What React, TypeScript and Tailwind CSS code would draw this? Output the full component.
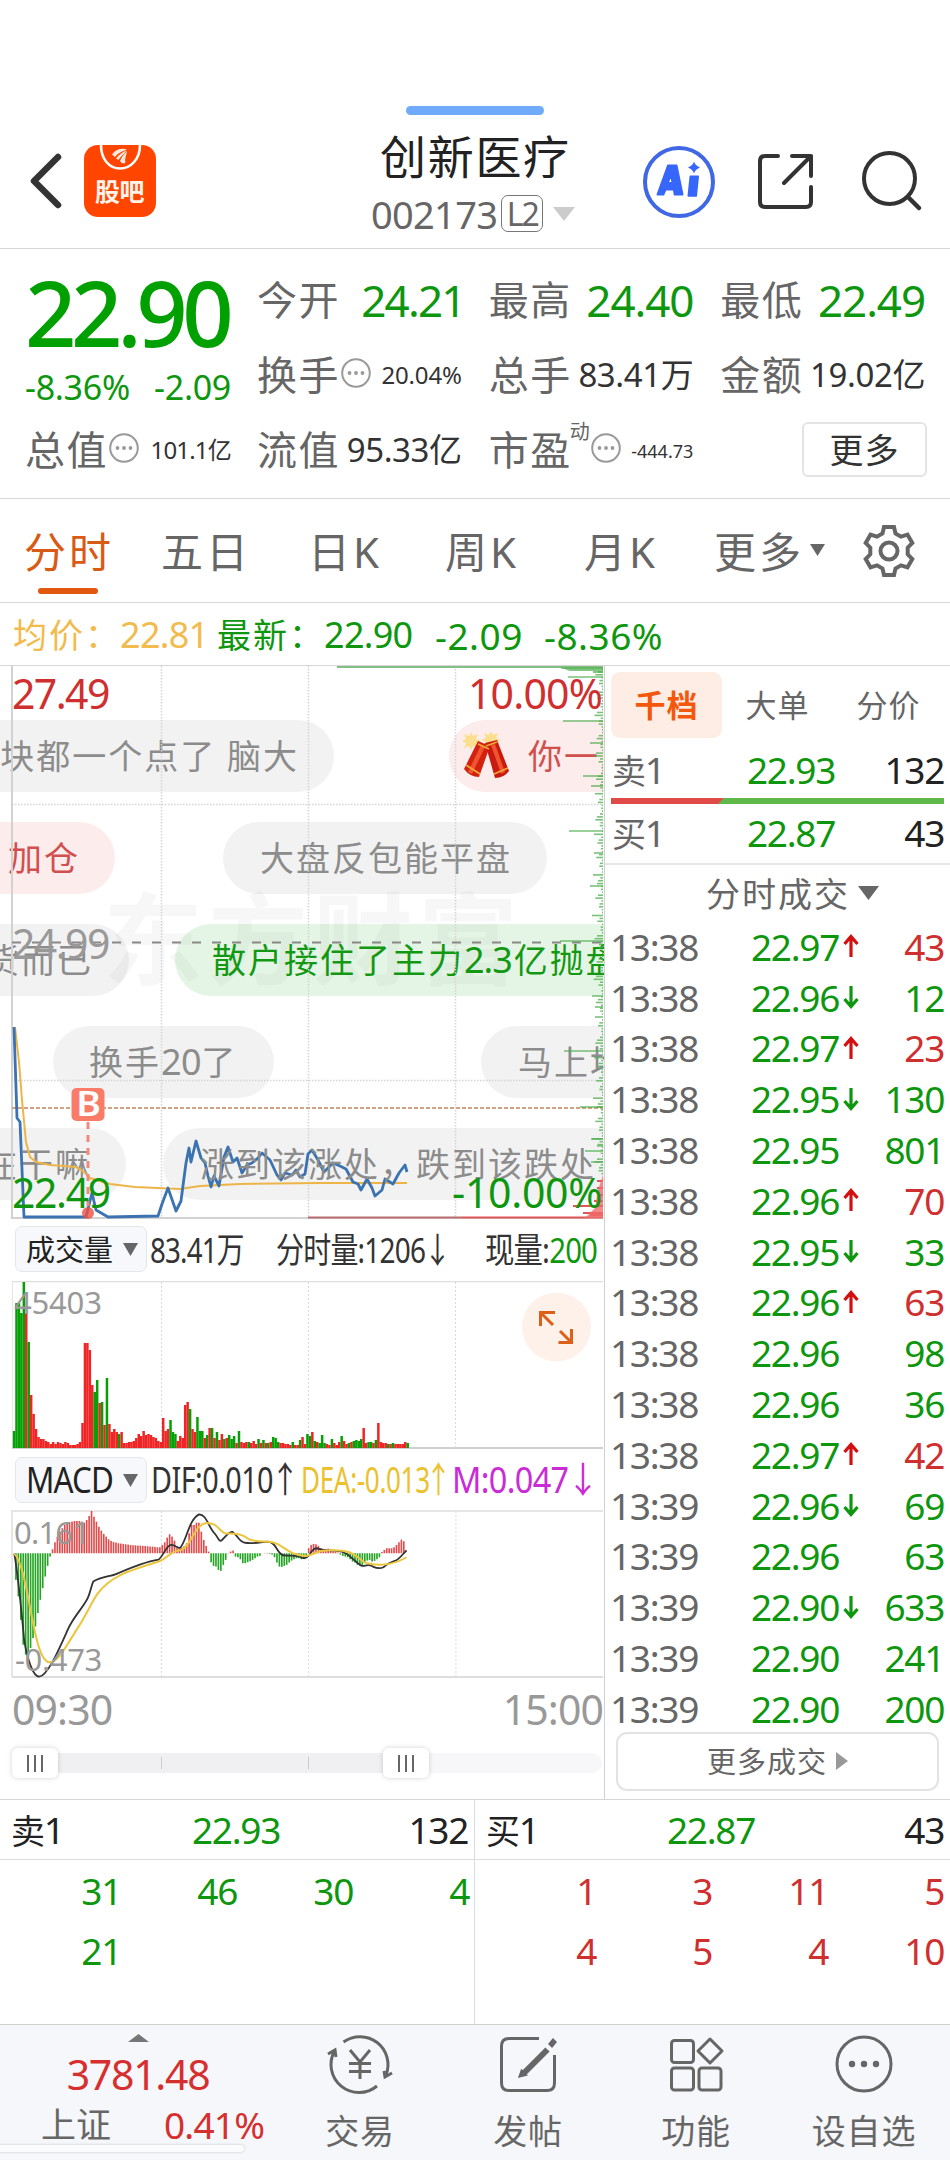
import React from 'react';

type Side = 'up' | 'down' | '';

type Tick = { time: string; price: string; dir: Side; qty: number; buy?: boolean };

const GREEN = '#0e970e';

const TICKS: Tick[] = [
  { time: '13:38', price: '22.97', dir: 'up', qty: 43, buy: true },
  { time: '13:38', price: '22.96', dir: 'down', qty: 12 },
  { time: '13:38', price: '22.97', dir: 'up', qty: 23, buy: true },
  { time: '13:38', price: '22.95', dir: 'down', qty: 130 },
  { time: '13:38', price: '22.95', dir: '', qty: 801 },
  { time: '13:38', price: '22.96', dir: 'up', qty: 70, buy: true },
  { time: '13:38', price: '22.95', dir: 'down', qty: 33 },
  { time: '13:38', price: '22.96', dir: 'up', qty: 63, buy: true },
  { time: '13:38', price: '22.96', dir: '', qty: 98 },
  { time: '13:38', price: '22.96', dir: '', qty: 36 },
  { time: '13:38', price: '22.97', dir: 'up', qty: 42, buy: true },
  { time: '13:39', price: '22.96', dir: 'down', qty: 69 },
  { time: '13:39', price: '22.96', dir: '', qty: 63 },
  { time: '13:39', price: '22.90', dir: 'down', qty: 633 },
  { time: '13:39', price: '22.90', dir: '', qty: 241 },
  { time: '13:39', price: '22.90', dir: '', qty: 200 },
];

// negative = down bar (green)
const VOLUME = [
  -17, -145, -145, -135, -166, 135, -106, 53, 34, 19, 11, 9, 9, 7, 6, 4, 6, 4, 6, 5, 4, 6, 5, 3, 3, 3, 4, 6,
  25, 105, 105, 98, 63, -56, -68, 45, -46, 23, -70, 24, 16, 19, 16, -14, 16, 5, 5, 6, 6, 7, 10, 14, 12, 17, 13, 14,
  13, 11, 10, 7, 6, 30, 17, 19, -28, -16, -14, 7, 12, 10, 43, 46, -39, 19, 16, -31, -17, -17, 10, -13, 20, -20, 10,
  -16, 8, 14, -9, 10, -13, -9, -12, 5, -17, 6, 5, 6, -6, 5, 7, 4, -9, 5, -8, 5, -5, 6, -11, -10, -6, 5, 5, 4, 4, 3,
  -6, 3, 3, -8, 11, 4, -14, -12, 16, -7, 6, -5, -13, -5, 4, 3, -9, 5, 3, 6, -12, 7, 4, -5, 6, -7, -8, -7, -9, 20,
  5, -6, -6, 5, -8, 25, 6, 5, 5, -4, 4, -5, 4, 4, 4, 4, 6, -5,
];

const MACD = [
  -80, -130, -200, -275, -305, -300, -285, -255, -220, -180, -140, -105, -70, -38, -10,
  12, 33, 50, 65, 75, 85, 90, 93, 95, 97, 97, 97, 95, 92, 100, 112, 127, 110, 95, 80, 68, 58, 50, 42, 37, 34, 32,
  30, 29, 28, 27, 26, 25, 24, 24, 23, 23, 22, 22, 21, 20, 20, 19, 18, 18, 25, 33, 47, 57, 50, 38, 15, 15, 17, 22, 30,
  60, 85, 85, 92, 92, 65, 40, 22, 5, -27, -38, -40, -50, -53, -35, -20, 1, 5, 8, -10, -12, -18, -30, -30, -27, -24,
  -20, -15, -10, -8, 0, 1, 1, -2, -4, -12, -28, -40, -41, -38, -35, -28, -22, -18, -15, -15, -18, -17, -8, 15,
  25, 28, 27, 22, 15, 8, 12, 14, 8, 5, 4, 2, -4, -8, -10, -12, -18, -25, -28, -35, -38, -35, -30, -22, -20, -25, -23,
  -18, -12, 4, 10, 15, 15, 15, 18, 25, 33, 41, 36,
];

const PRICE_LINE =
  '14,1027 17,1118 20,1122 24,1217 86,1217 92,1193 96,1210 108,1217 158,1216 162,1204 168,1188 176,1211 181,1201 184,1178 186,1163 189,1148 191,1162 196,1141 201,1158 205,1163 208,1176 211,1187 214,1176 219,1186 224,1157 228,1147 233,1162 237,1158 242,1173 247,1165 252,1163 258,1158 262,1153 270,1160 277,1175 281,1180 285,1173 292,1175 296,1170 300,1177 305,1174 308,1154 312,1150 318,1160 324,1172 333,1163 340,1166 346,1169 353,1182 358,1184 361,1190 367,1179 372,1188 375,1196 382,1190 385,1179 393,1184 399,1173 405,1165 407,1172';

const AVG_LINE =
  '15,1027 19,1062 22,1100 26,1142 30,1157 36,1162 50,1165 76,1167 84,1172 90,1178 110,1184 135,1187 180,1189 200,1186 240,1184 320,1183 407,1183';

// [y, start x] of the longer rungs in the price distribution at the right edge
const RUNGS = [
  [668, 561], [677, 568], [721, 563], [743, 590], [776, 583], [786, 591], [831, 569], [853, 594], [886, 590],
  [941, 560], [996, 592], [1007, 595], [1051, 564], [1107, 580], [1139, 591], [1146, 597], [1151, 585], [1162, 591],
];

const MINI_RUNGS = Array.from({ length: 175 }, (_, i) => {
  const w = ((i * 37) % 11) * ((i * 13) % 7);
  return { y: 669 + i * 2.9, w: 1 + w / 6 };
});

const Down: React.FC<{ w: number; h: number; className: string }> = ({ w, h, className }) => (
  <svg width={w} height={h} viewBox="0 0 20 14" preserveAspectRatio="none" className={`shrink-0 ${className}`}>
    <path d="M0 0h20L10 14z" fill="currentColor" />
  </svg>
);

const Dots: React.FC = () => (
  <svg width="30" height="30" viewBox="0 0 30 30" className="mb-[4px] ml-px shrink-0 text-[#999]">
    <circle cx="15" cy="15" r="13.8" fill="none" stroke="currentColor" strokeWidth="2" />
    <circle cx="8.5" cy="15" r="1.9" fill="currentColor" />
    <circle cx="15" cy="15" r="1.9" fill="currentColor" />
    <circle cx="21.5" cy="15" r="1.9" fill="currentColor" />
  </svg>
);

const Header: React.FC = () => (
  <header className="h-[249px] border-b border-[#d6d6d6] pt-[106px]">
    <div className="mx-auto h-[9px] w-[138px] rounded-full bg-[#70abfb]" />
    <div className="flex h-[133px]">
      <svg width="34" height="60" viewBox="0 0 34 60" className="ml-[29px] mt-[36px] shrink-0">
        <path d="M29 6 5 30l24 24" fill="none" stroke="#333" strokeWidth="6.5" strokeLinecap="round" strokeLinejoin="round" />
      </svg>
      <div className="relative ml-[21px] mt-[30px] h-[72px] w-[72px] shrink-0 overflow-hidden rounded-[14px] bg-[#ff4500]">
        <svg width="72" height="72" viewBox="0 0 72 72" className="absolute inset-0">
          <path d="M17 0c0 14 8 23.5 19 23.5S56 14 56 0" fill="none" stroke="#fff" strokeWidth="2.6" />
          <path d="M28 9.500C32 4 38 3 43 4.500 38 6 33 9 31 12zM32 13.500C35 9.500 39 6.500 43 5.500 40 9 36 12 34.500 15zM36 16C38 12 40 8.500 43 6.500 42 11 40.500 14 41.500 17.500 39.500 19 37.500 18.500 36 16z" fill="#ffe9de" />
        </svg>
        <span className="absolute left-[11px] top-[33px] text-[25px] font-bold leading-[27px] tracking-[-0.5px] text-[#fff3ea]">股吧</span>
      </div>
      <div className="ml-[215px] flex w-[205px] shrink-0 flex-col">
        <span className="mt-[13px] h-[57px] pl-[9px] text-[46px] leading-[57px] tracking-[1.7px] text-[#222]">创新医疗</span>
        <div className="flex h-[57px] items-center whitespace-nowrap text-[#666]">
          <span className="text-[38px] leading-[50px] tracking-[-0.7px]">002173</span>
          <span className="ml-[4px] flex h-[37px] w-[42px] items-center justify-center rounded-[7px] border border-[#777] text-[32px] leading-none tracking-[-2px]">L2</span>
          <Down w={22} h={14} className="ml-[10px] text-[#ccc]" />
        </div>
      </div>
      <svg width="74" height="74" viewBox="0 0 74 74" className="ml-[66px] mt-[30px] shrink-0">
        <circle cx="37" cy="37" r="34" fill="none" stroke="#4067e4" strokeWidth="4" />
        <path d="M15.5 49.5 26 20.5h8.500L40.5 49.5h-7.800l-.8-5H23.5l-2.200 5zM25.5 38h5l-1.200-8.500z" fill="#3766fb" stroke="#3766fb" strokeWidth="2" fillRule="evenodd" strokeLinejoin="round" />
        <path d="M48.5 31.5h7.500l-2 19.300h-7.500z" fill="#3766fb" stroke="#3766fb" strokeWidth="2" strokeLinejoin="round" />
        <path d="M52 16.500c1 3 2.500 4.500 6 6-3.500 1.500-5 3-6 6-1-3-2.500-4.500-6-6 3.500-1.500 5-3 6-6z" fill="#3766fb" />
      </svg>
      <svg width="62" height="62" viewBox="0 0 62 62" className="ml-[39px] mt-[36px] shrink-0">
        <path d="M23 5H10q-5 0-5 5v41q0 5 5 5h41q5 0 5-5V36M37 5h19v20M56 5 29 32" fill="none" stroke="#333" strokeWidth="4" strokeLinecap="round" strokeLinejoin="round" />
      </svg>
      <svg width="64" height="64" viewBox="0 0 64 64" className="ml-[42px] mt-[34px] shrink-0">
        <circle cx="30.5" cy="29.5" r="25.5" fill="none" stroke="#333" strokeWidth="4" />
        <path d="M49 48 60 59" stroke="#333" strokeWidth="4.500" strokeLinecap="round" />
      </svg>
    </div>
  </header>
);

const Label: React.FC<{ children: React.ReactNode }> = ({ children }) => (
  <span className="text-[40px] tracking-[1.5px] text-[#666]">{children}</span>
);

const Quote: React.FC = () => (
  <section className="flex h-[250px] border-b border-[#d6d6d6] pl-[25px] pt-[13px] leading-none">
    <div className="w-[206px] shrink-0">
      <div className="flex h-[100px] items-center whitespace-nowrap text-[90px] font-medium tracking-[-5.4px] text-[#00a000]">22.90</div>
      <div className="flex h-[50px] items-center justify-between whitespace-nowrap pb-px text-[34px] tracking-[-0.3px]" style={{ color: GREEN }}>
        <span>-8.36%</span>
        <span>-2.09</span>
      </div>
      <div className="flex h-[75px] items-center whitespace-nowrap">
        <Label>总值</Label>
        <Dots />
        <span className="ml-auto text-[24px] tracking-[-0.8px] text-[#333]">101.1亿</span>
      </div>
    </div>
    <div className="ml-[26px] grid w-[668px] shrink-0 grid-cols-3 grid-rows-[75px_75px_75px] gap-x-[27px] whitespace-nowrap text-[#333]">
      {[['今开', '24.21'], ['最高', '24.40'], ['最低', '22.49']].map(([k, v]) => (
        <div key={k} className="flex items-center justify-between">
          <Label>{k}</Label>
          <span className={`text-[44px] ${v.endsWith('1') ? 'mr-[-3px] tracking-[-1.8px]' : 'tracking-[-1.1px]'}`} style={{ color: GREEN }}>{v}</span>
        </div>
      ))}
      <div className="flex items-center">
        <Label>换手</Label>
        <Dots />
        <span className="ml-auto text-[24px] tracking-[-0.2px]">20.04%</span>
      </div>
      {[['总手', '83.41万'], ['金额', '19.02亿'], ['流值', '95.33亿']].map(([k, v]) => (
        <div key={k} className="flex items-center justify-between">
          <Label>{k}</Label>
          <span className="text-[33px] tracking-[-0.4px]">{v}</span>
        </div>
      ))}
      <div className="flex items-center">
        <Label>市盈</Label>
        <span className="mb-[36px] ml-[-2px] text-[20px] text-[#666]">动</span>
        <Dots />
        <span className="ml-auto pt-[3px] text-[18px]">-444.73</span>
      </div>
      <div className="flex items-center justify-end">
        <button className="mr-[-2px] flex h-[55px] w-[125px] items-center justify-center rounded-[6px] border-2 border-[#e4e4e4] text-[34px] tracking-[1px]">更多</button>
      </div>
    </div>
  </section>
);

const Tabs: React.FC = () => (
  <nav className="flex h-[104px] whitespace-nowrap border-b border-[#d6d6d6] text-[42px] leading-[106px] tracking-[3px] text-[#666]">
    <div className="relative ml-[24px] w-[137px] text-[#d85a14]">
      分时
      <span className="absolute left-[14px] top-[89px] h-[6px] w-[60px] rounded-full bg-[#e2580f]" />
    </div>
    <span className="w-[147px]">五日</span>
    <span className="w-[137px]">日K</span>
    <span className="w-[139px]">周K</span>
    <span className="w-[130px]">月K</span>
    <span>更多</span>
    <Down w={15} h={12} className="ml-[6px] mt-[45px]" />
    <svg width="54" height="54" viewBox="0 0 54 54" className="ml-[37px] mt-[25px] shrink-0">
      <path d="M22 3h10l1.500 6.500 5.500 3.200 6.500-2 4.800 8.200-4.600 4.800v6.600l4.600 4.800-4.800 8.200-6.500-2-5.500 3.200L32 51H22l-1.500-6.500-5.500-3.200-6.500 2-4.800-8.200 4.600-4.800v-6.600l-4.600-4.800 4.800-8.200 6.500 2 5.500-3.200z" fill="none" stroke="#666" strokeWidth="4" />
      <circle cx="27" cy="27" r="8.5" fill="none" stroke="#666" strokeWidth="4" />
    </svg>
  </nav>
);

const Summary: React.FC = () => (
  <div className="flex h-[63px] items-center whitespace-nowrap border-b border-[#d6d6d6] pl-[13px] pt-[2px] text-[36px] leading-none tracking-[-0.7px]" style={{ color: GREEN }}>
    <span className="w-[107px] text-[34px] tracking-[2px] text-[#f1bb4e]">均价：</span>
    <span className="w-[97px] text-[#f1bb4e]">22.81</span>
    <span className="w-[107px] text-[34px] tracking-[2px]">最新：</span>
    <span className="w-[111px]">22.90</span>
    <span className="w-[109px] text-[37px] tracking-[0.5px]">-2.09</span>
    <span className="text-[37px] tracking-[0.5px]">-8.36%</span>
  </div>
);

const Bubble: React.FC<{ className: string; children: React.ReactNode }> = ({ className, children }) => (
  <div className={`absolute flex h-[72px] items-center whitespace-nowrap text-[34px] leading-none tracking-[2px] ${className}`}>{children}</div>
);

const GREY = 'bg-black/5 text-[#8c8c8c]';

const Firecracker: React.FC = () => (
  <svg width="50" height="50" viewBox="0 0 50 50" className="shrink-0">
    <g fill="#fbdf8e">
      <path d="m10 1 2 4 5-2-2 5 5 2-5 2 2 5-5-2-2 4-2-4-5 2 2-5-4-2 4-2-2-5 5 2z" />
      <path d="m30 0 2 4 5-2-2 5 5 2-5 2 2 5-5-2-2 4-2-4-5 2 2-5-5-2 5-2-2-5 5 2z" />
    </g>
    <path d="m17 10 12 5L18 46q-9 0-15-8z" fill="#d3200f" />
    <path d="m24 12 12-3 12 31q-5 7-14 7z" fill="#c81a0e" />
    <path d="m20 14 4 2-13 27-4-2zM30 14l4-1 10 28-4 2z" fill="#f0532f" />
    <path d="m5 34 14 9M33 43l14-6M17 13l11 5M25 15l11-4" stroke="#f0a83a" strokeWidth="1.800" fill="none" />
  </svg>
);

const PriceChart: React.FC = () => (
  <div className="relative mt-[-1px] h-[554px] overflow-hidden leading-none">
    <span className="absolute left-[103px] top-[218px] whitespace-nowrap text-[100px] font-bold leading-[110px] tracking-[5px] text-black/[0.03]">东方财富</span>
    <Bubble className={`${GREY} right-[270px] top-[55px] rounded-r-full pr-[35px]`}>块都一个点了 脑大</Bubble>
    <Bubble className="left-[449px] top-[55px] w-[200px] rounded-l-full bg-[#fdecec] pl-[12px] text-[#d14f4f]">
      <Firecracker />
      <span className="ml-[17px]">你一</span>
    </Bubble>
    <Bubble className="left-0 top-[157px] w-[115px] rounded-r-full bg-[#fdecec] pl-[8px] text-[#d14f4f]">加仓</Bubble>
    <Bubble className={`${GREY} left-[223px] top-[157px] w-[324px] rounded-full pl-[37px]`}>大盘反包能平盘</Bubble>
    <Bubble className={`${GREY} right-[475px] top-[259px] rounded-r-full pr-[36px]`}>货而已</Bubble>
    <Bubble className="left-[175px] top-[259px] w-[500px] rounded-l-full bg-[#00a000]/10 pl-[37px] text-[#129812]">
      散户接住了主力<span className="text-[36px] tracking-[-1px]">2.3</span>
      <span className="ml-[2px]">亿抛盘</span>
    </Bubble>
    <Bubble className={`${GREY} left-[53px] top-[361px] w-[221px] rounded-full pl-[36px]`}>
      换手<span className="text-[36px] tracking-[-0.5px]">20</span>了
    </Bubble>
    <Bubble className={`${GREY} left-[481px] top-[361px] w-[200px] rounded-l-full pl-[37px]`}>马上均</Bubble>
    <Bubble className={`${GREY} right-[478px] top-[463px] rounded-r-full pr-[35px]`}>在干嘛</Bubble>
    <div className="absolute left-[163px] top-[463px] h-[72px] w-[500px] rounded-l-full bg-black/5" />

    <svg width="604" height="554" viewBox="0 665 604 554" className="absolute inset-0">
      <g stroke="#d4d4d4" strokeWidth="1.500" strokeDasharray="1.500 1.500">
        <path d="M161.500 666V1218M308.500 666V1218M455.500 666V1218M12 804.500H603M12 1080.500H603" />
      </g>
      <path d="M12 665V1218H603" fill="none" stroke="#d2d2d2" strokeWidth="2" />
      <path d="M12 942.500H603" stroke="#888" strokeWidth="2" strokeDasharray="9 11" />
      <path d="M12 1108H603" stroke="#d3a183" strokeWidth="2" strokeDasharray="4 2" />
      <path d="M337 667H603" stroke="#84bf84" strokeWidth="2" />
      <g stroke="#4cae4c" strokeOpacity="0.75" strokeWidth="1.600">
        {RUNGS.map(([y, x]) => <path key={y} d={`M${x} ${y}H603`} />)}
        {MINI_RUNGS.map((r) => <path key={r.y} d={`M${603 - r.w} ${r.y}H603`} />)}
      </g>
      <path d="M562 668H603V673H593V671H570z" fill="#4cae4c" fillOpacity="0.7" />
      <path d="M308 1217.500H461" stroke="#b96f6f" strokeWidth="2" />
      <path d="M461 1217.500H603M573 1206H603M583 1213H603M590 1215H603M597 1188H603M598 1195H603M594 1201H603M597 1181H603" stroke="#e05555" strokeWidth="2" />
      <path d="M603 1175V1218H585L595 1208 598 1190z" fill="#f06c6c" fillOpacity="0.8" />
      <polyline points={AVG_LINE} fill="none" stroke="#edb548" strokeWidth="2" />
      <polyline points={PRICE_LINE} fill="none" stroke="#3a72b2" strokeWidth="2.800" strokeLinejoin="round" />
      <path d="M88 1122V1206" stroke="#f08a7b" strokeWidth="3" strokeDasharray="7 6" />
      <circle cx="88" cy="1213" r="6" fill="#ee4f42" fillOpacity="0.8" />
      <rect x="71.5" y="1088" width="33" height="33" rx="5" fill="#f97c69" />
    </svg>
    <span className="absolute left-[72px] top-[422px] w-[33px] scale-x-[1.1] text-center text-[34px] font-semibold leading-[33px] text-white">B</span>

    <Bubble className="left-[200px] top-[463px] text-[#8c8c8c]">涨到该涨处，跌到该跌处</Bubble>
    <div className="absolute left-[12px] top-[7px] text-[41px] leading-[42px] tracking-[-1.6px] text-[#cf2f2f]">27.49</div>
    <div className="absolute right-[2px] top-[7px] text-[41px] leading-[42px] tracking-[-0.8px] text-[#cf2f2f]">10.00%</div>
    <div className="absolute left-[12px] top-[257px] text-[41px] leading-[42px] tracking-[-1.6px] text-[#999]">24.99</div>
    <div className="absolute left-[12px] top-[506px] text-[41px] leading-[42px] tracking-[-1.4px] text-[#0e970e]">22.49</div>
    <div className="absolute right-[2px] top-[506px] text-[41px] leading-[42px] tracking-[-0.3px] text-[#0e970e]">-10.00%</div>
  </div>
);

const Picker: React.FC<{ children: React.ReactNode }> = ({ children }) => (
  <button className="flex h-[46px] w-[132px] shrink-0 items-center justify-between rounded-[7px] border border-[#e4e6ec] bg-[#f7f8fb] pl-[10px] pr-[8px] text-[#222]">
    {children}
    <Down w={15} h={13} className="text-[#666]" />
  </button>
);

const VolumeChart: React.FC = () => (
  <>
    <div className="flex h-[62px] items-center whitespace-nowrap pb-[2px] pl-[15px] leading-none text-[#333]">
      <Picker><span className="text-[29px]">成交量</span></Picker>
      <span className="ml-[3px] w-[126px] origin-left scale-x-[0.79] text-[35px] tracking-[-1px]">83.41万</span>
      <span className="w-[209px] origin-left scale-x-[0.8] text-[35px] tracking-[-1px]">分时量:1206<span className="ml-[-2px]">↓</span></span>
      <span className="w-[118px] origin-left scale-x-[0.84] text-[35px] tracking-[-1px]">现量:<span className="text-[#0e970e]">200</span></span>
    </div>
    <div className="relative ml-[12px] h-[168px] w-[592px]">
      <svg width="592" height="168" viewBox="12 1281 592 168">
        <path d="M12 1448V1281.500H603" fill="none" stroke="#dedede" strokeWidth="1.500" />
        <path d="M12 1448H603" stroke="#d0d0d0" strokeWidth="2" />
        <path d="M161.500 1282V1448M308.500 1282V1448M455.500 1282V1448" stroke="#dadada" strokeDasharray="2 2" />
        {VOLUME.map((v, i) => (
          <rect key={i} x={12.8 + i * 2.445} y={1448 - Math.abs(v)} width="2.5" height={Math.abs(v)} fill={v < 0 ? '#06a006' : '#ef2525'} />
        ))}
        <circle cx="556.5" cy="1327" r="34.5" fill="#fef1ea" />
        <path d="M540.500 1326V1312.500H555M542 1314l11 11M558.500 1342.500H571.500V1329M570.500 1341.500 560 1331" fill="none" stroke="#dd6018" strokeWidth="3" />
      </svg>
      <span className="absolute left-[2px] top-[5px] text-[31px] leading-[32px] tracking-[-0.2px] text-[#999]">45403</span>
    </div>
  </>
);

const MacdChart: React.FC = () => (
  <>
    <div className="flex h-[62px] items-center whitespace-nowrap pl-[15px] leading-none">
      <Picker><span className="w-[90px] origin-left scale-x-[0.87] text-[36px] tracking-[-1px]">MACD</span></Picker>
      <span className="ml-[4px] w-[150px] origin-left scale-x-[0.8] text-[36px] tracking-[-0.7px] text-[#333]">DIF:0.010<span className="ml-[-3px]">↑</span></span>
      <span className="w-[151px] origin-left scale-x-[0.725] text-[36px] tracking-[-0.5px] text-[#ebc12e]">DEA:-0.013<span className="ml-[-6px]">↑</span></span>
      <span className="origin-left scale-x-[0.9] text-[36px] tracking-[-0.7px] text-[#c92bd6]">M:0.047<span className="ml-[-2px]">↓</span></span>
    </div>
    <div className="relative ml-[12px] h-[168px] w-[592px]">
      <svg width="591" height="166" viewBox="31 35 1519 499" preserveAspectRatio="none" className="overflow-visible">
        <path d="M31 534V35H1550" fill="none" stroke="#dedede" strokeWidth="1.500" vectorEffect="non-scaling-stroke" />
        <path d="M31 534H1550" stroke="#dedede" strokeWidth="2" vectorEffect="non-scaling-stroke" />
        <path d="M415 35V534M793.500 35V534M1172 35V534" stroke="#dadada" strokeDasharray="2 2" vectorEffect="non-scaling-stroke" />
        {MACD.map((v, i) => (
          <rect key={i} x={39 + i * 6.27} y={v > 0 ? 162 - v : 162} width="4.2" height={Math.abs(v)} fill={v < 0 ? '#24a524' : '#e04b4b'} />
        ))}
        <path d="M37 163C45 220 55 330 62 420C70 480 85 533 101 533C122 532 150 455 175 390C190 350 222 315 228 290C234 272 236 255 240 247C260 232 285 232 300 224C340 203 380 186 408 181C420 170 428 137 440 137S455 147 463 146C480 125 485 60 512 45C530 45 535 80 550 100C560 112 563 130 570 123C582 110 588 97 598 98C612 110 615 127 628 130C650 135 670 128 688 127C712 130 710 160 727 168C745 170 755 168 770 172C780 180 788 178 795 168C803 150 812 143 820 149C835 155 850 152 865 155C900 157 905 185 930 200C945 200 950 192 960 203C970 208 978 208 986 204C997 190 1005 190 1017 184C1028 178 1035 165 1045 153" fill="none" stroke="#333" strokeWidth="1.800" vectorEffect="non-scaling-stroke" />
        <path d="M37 163C60 190 70 290 85 370C95 430 105 480 125 490C150 490 165 450 190 405C225 345 230 320 250 285C285 230 330 215 408 187C430 180 435 155 465 152C490 145 500 75 530 71C560 70 562 95 580 103C600 103 620 100 640 120C660 130 680 125 700 129C730 135 740 170 788 170C810 165 815 152 845 153C900 150 910 165 935 188C955 198 1000 205 1045 174" fill="none" stroke="#ecc53c" strokeWidth="2" vectorEffect="non-scaling-stroke" />
      </svg>
      <span className="absolute left-[2px] top-[5px] text-[31px] leading-[32px] tracking-[-0.8px] text-[#999]">0.161</span>
      <span className="absolute left-[3px] top-[132px] text-[31px] leading-[32px] tracking-[-0.4px] text-[#999]">-0.473</span>
    </div>
  </>
);

const Handle: React.FC = () => (
  <div className="flex h-[30px] w-[46px] items-center justify-center gap-[5px] rounded-[6px] bg-white shadow-[0_0_5px_rgba(0,0,0,0.18)]">
    <i className="h-[17px] w-[2px] bg-[#666]" />
    <i className="h-[17px] w-[2px] bg-[#666]" />
    <i className="h-[17px] w-[2px] bg-[#666]" />
  </div>
);

const TimeAxis: React.FC = () => (
  <>
    <div className="flex h-[62px] items-center justify-between pb-[2px] pl-[12px] pr-[1px] text-[41px] leading-none tracking-[-0.9px] text-[#999]">
      <span>09:30</span>
      <span>15:00</span>
    </div>
    <div className="relative ml-[12px] mt-[12px] h-[20px] w-[590px] rounded-full bg-[#f7f7fa]">
      <div className="flex h-[20px] w-[394px] items-center rounded-l-full bg-[#f0f0f3]">
        <i className="ml-[149px] h-[12px] w-px bg-[#ccc]" />
        <i className="ml-[146px] h-[12px] w-px bg-[#ccc]" />
      </div>
      <div className="absolute left-0 top-[-5px]"><Handle /></div>
      <div className="absolute left-[371px] top-[-5px]"><Handle /></div>
    </div>
  </>
);

const Arrow: React.FC<{ dir: Side }> = ({ dir }) => (
  <svg width="20" height="28" viewBox="0 0 20 28" className={`shrink-0 ${dir === 'up' ? 'text-[#d40f0f]' : 'rotate-180 text-[#0e970e]'}`}>
    {dir && <path d="M10 25V4.500M3.500 12 10 4.500l6.500 7.500" fill="none" stroke="currentColor" strokeWidth="3.200" />}
  </svg>
);

const Level: React.FC<{ side: string; price: string; qty: number }> = ({ side, price, qty }) => (
  <div className="flex h-[54px] items-center pb-[5px] text-[37px] leading-none tracking-[-1.3px]">
    <span className="w-[135px] text-[#666]"><span className="text-[34px]">{side}</span>1</span>
    <span style={{ color: GREEN }}>{price}</span>
    <span className="ml-auto text-[#222]">{qty}</span>
  </div>
);

const OrderPanel: React.FC = () => (
  <aside className="h-full min-w-0 flex-1 border-l border-[#d0d0d0] pt-[6px] leading-none">
    <div className="ml-[6px] flex h-[66px] items-center text-[31px] tracking-[1px] text-[#666]">
      <span className="flex h-[66px] w-[111px] items-center justify-center rounded-[9px] bg-[#feede4] font-bold text-[#f4580c]">千档</span>
      <span className="w-[111px] text-center">大单</span>
      <span className="w-[111px] text-center">分价</span>
    </div>
    <div className="mt-[7px] pl-[7px] pr-[6px]">
      <Level side="卖" price="22.93" qty={132} />
    </div>
    <div className="ml-[6px] mt-[-1px] flex h-[6px] w-[333px] bg-[#5eb84a]">
      <svg width="113" height="6"><path d="M0 0H113L107 6H0z" fill="#e04a48" /></svg>
    </div>
    <div className="mt-[4px] pl-[7px] pr-[6px]">
      <Level side="买" price="22.87" qty={43} />
    </div>
    <div className="mt-px flex h-[60px] items-center justify-center border-t-2 border-[#e6e7ea] pl-[38px] text-[34px] tracking-[2px] text-[#666]">
      分时成交
      <Down w={21} h={14} className="ml-[8px] mb-[3px] mr-[8px]" />
    </div>
    <div className="mt-[-2px] pl-[5px] pr-[6px] text-[37px] tracking-[-1.3px]">
      {TICKS.map((t, i) => (
        <div key={i} className="flex h-[50.8px] items-center">
          <span className="w-[141px] text-[#666]">{t.time}</span>
          <span className="w-[90px]" style={{ color: GREEN }}>{t.price}</span>
          <Arrow dir={t.dir} />
          <span className={`ml-auto ${t.buy ? 'text-[#cf2f2f]' : 'text-[#0e970e]'}`}>{t.qty}</span>
        </div>
      ))}
    </div>
    <button className="ml-[11px] mt-[-2px] flex h-[59px] w-[323px] items-center justify-center rounded-[11px] border-2 border-[#e3e3e3] text-[29px] tracking-[1px] text-[#666]">
      更多成交
      <svg width="12" height="18" viewBox="0 0 12 18" className="ml-[9px]"><path d="M0 0 12 9 0 18z" fill="#999" /></svg>
    </button>
  </aside>
);

const DEPTH = [
  { side: '卖', price: '22.93', qty: 132, color: '#0e970e', orders: [31, 46, 30, 4, 21] },
  { side: '买', price: '22.87', qty: 43, color: '#cf2f2f', orders: [1, 3, 11, 5, 4, 5, 4, 10] },
];

const Depth: React.FC = () => (
  <section className="grid h-[225px] grid-cols-2 border-t border-[#d6d6d6] text-[37px] leading-none tracking-[-1.3px]">
    {DEPTH.map((d) => (
      <div key={d.side} className="border-r border-[#dcdcdc] last:border-r-0">
        <div className="flex h-[60px] items-center border-b border-[#dcdcdc] pl-[11px] pr-[6px] text-[#222]">
          <span className="w-[181px]"><span className="text-[34px]">{d.side}</span>1</span>
          <span style={{ color: GREEN }}>{d.price}</span>
          <span className="ml-auto">{d.qty}</span>
        </div>
        <div className="grid w-[469px] auto-rows-[60px] grid-cols-[121px_116px_116px_116px] items-center text-right" style={{ color: d.color }}>
          {d.orders.map((o, i) => <span key={i}>{o}</span>)}
        </div>
      </div>
    ))}
  </section>
);

const NavItem: React.FC<{ label: string; children: React.ReactNode }> = ({ label, children }) => (
  <div className="flex w-[168px] shrink-0 flex-col items-center pt-[7px]">
    <svg width="66" height="64" viewBox="0 0 66 64" fill="none" stroke="#666" strokeWidth="3">{children}</svg>
    <span className="mt-[18px] text-[34px] tracking-[0.8px]">{label}</span>
  </div>
);

const BottomBar: React.FC = () => (
  <footer className="flex h-[136px] overflow-hidden border-t border-[#d0d0d0] bg-[#f6f7fa] leading-none text-[#666]">
    <div className="relative w-[276px] shrink-0">
      <div className="flex flex-col items-center pt-[9px]">
        <svg width="21" height="8" viewBox="0 0 21 8"><path d="M0 8 10.500 0 21 8z" fill="#777" /></svg>
        <span className="mt-[12px] text-[41px] leading-[40px] tracking-[-1.3px] text-[#d62f2f]">3781.48</span>
      </div>
      <div className="mt-[12px] flex items-center pl-[41px]">
        <span className="w-[123px] text-[35px]">上证</span>
        <span className="text-[37px] tracking-[-0.8px] text-[#d62f2f]">0.41%</span>
      </div>
      <div className="absolute left-[-8px] top-[120px] h-[7px] w-[252px] rounded-[4px] bg-[#fafbfc] shadow-[0_0_3px_rgba(0,0,0,0.2)]" />
    </div>
    <NavItem label="交易">
      <path d="M16.500 10A28 28 0 0 1 59 43M50 54A28 28 0 0 1 7.500 19M1 22l7-4 1 7M65 41l-7 4-1-6" />
      <path d="M23 18l10 12 10-12M22 31.500h22M22 39.500h22M33 30v17" />
    </NavItem>
    <NavItem label="发帖">
      <path d="M44 6.500H14q-7.500 0-7.500 7.500v37q0 7.500 7.500 7.500h38q7.500 0 7.500-7.500V23" />
      <path d="m52.500 17.500-24 24" strokeWidth="6" />
      <path d="m24 45 2.500-7 5 5zM54 12l4-5 3 3-4 5z" fill="#666" strokeWidth="1.500" />
    </NavItem>
    <NavItem label="功能">
      <rect x="8.5" y="8.5" width="22" height="22" rx="3" />
      <rect x="8.5" y="36" width="22" height="22" rx="3" />
      <rect x="36" y="36" width="22" height="22" rx="3" />
      <path d="M47 7 59 19 47 31 35 19z" strokeLinejoin="round" />
    </NavItem>
    <NavItem label="设自选">
      <circle cx="33" cy="32" r="27" />
      <g fill="#666" stroke="none">
        <circle cx="21" cy="32" r="3.2" />
        <circle cx="33" cy="32" r="3.2" />
        <circle cx="45" cy="32" r="3.2" />
      </g>
    </NavItem>
  </footer>
);

export default function App() {
  return (
    <div className="h-[2160px] w-[950px] overflow-hidden bg-white font-['Noto_Sans','Noto_Sans_CJK_SC',sans-serif]">
      <Header />
      <Quote />
      <Tabs />
      <Summary />
      <div className="flex h-[1133px]">
        <div className="w-[604px] shrink-0">
          <PriceChart />
          <VolumeChart />
          <MacdChart />
          <TimeAxis />
        </div>
        <OrderPanel />
      </div>
      <Depth />
      <BottomBar />
    </div>
  );
}
